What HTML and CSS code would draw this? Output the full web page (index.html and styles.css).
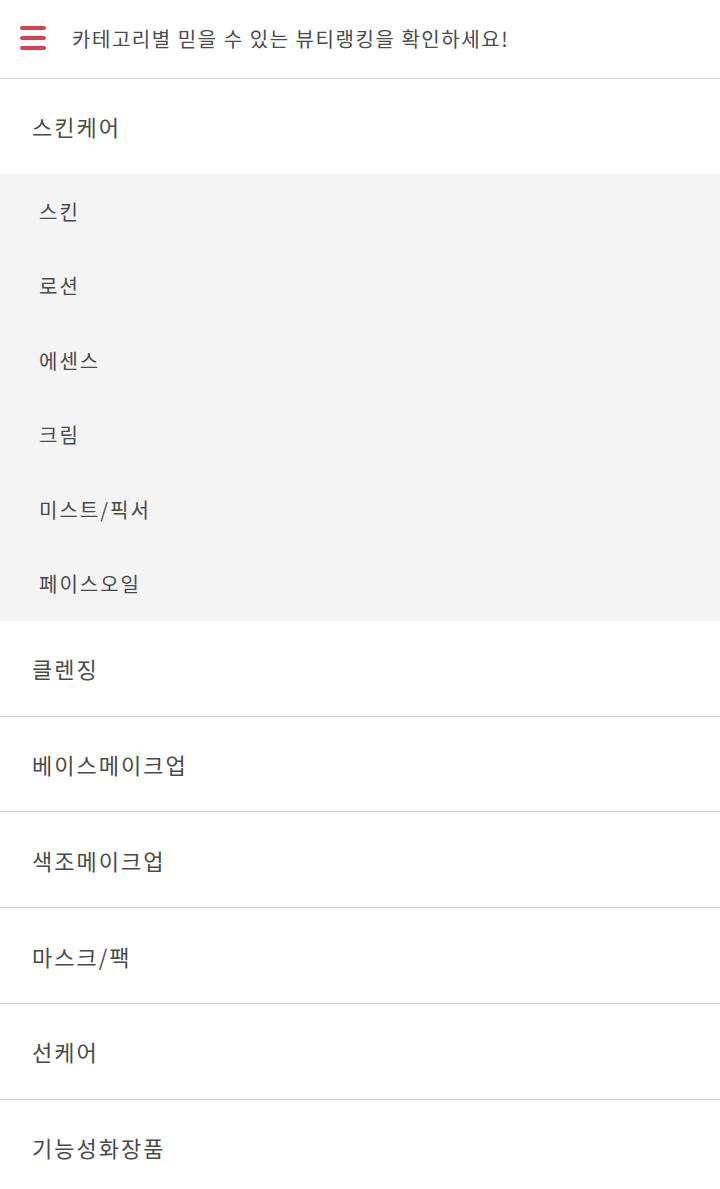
FILE: index.html
```html
<!doctype html>
<html>
<head>
    <title>뷰티랭킹 카테고리</title>

    <link rel="stylesheet" href="styles.css">
</head>
<body>
    <header class="top-bar">
      <button class="menu-btn" type="button">
        <span class="menu-line"></span>
        <span class="menu-line"></span>
        <span class="menu-line"></span>
      </button>
      <h1 class="top-title">카테고리별 믿을 수 있는 뷰티랭킹을 확인하세요!</h1>
    </header>

    <ul class="category-list">
      <li class="category open">
        <a class="category-name">스킨케어</a>
        <ul class="sub-list">
          <li class="sub-item">스킨</li>
          <li class="sub-item">로션</li>
          <li class="sub-item">에센스</li>
          <li class="sub-item">크림</li>
          <li class="sub-item">미스트/픽서</li>
          <li class="sub-item">페이스오일</li>
        </ul>
      </li>
      <li class="category"><a class="category-name">클렌징</a></li>
      <li class="category"><a class="category-name">베이스메이크업</a></li>
      <li class="category"><a class="category-name">색조메이크업</a></li>
      <li class="category"><a class="category-name">마스크/팩</a></li>
      <li class="category"><a class="category-name">선케어</a></li>
      <li class="category"><a class="category-name">기능성화장품</a></li>
    </ul>
</body>
</html>
```

FILE: styles.css
```css
* {
  margin: 0;
  padding: 0;
  box-sizing: border-box;
}
body {
  font-family: "Noto Sans CJK KR", "Noto Sans", sans-serif;
  color: #4a4a4a;
  background-color: #fff;
}
.top-bar {
  display: flex;
  align-items: center;
  height: 79px;
  padding: 0 0 2px 20px;
  border-bottom: 1px solid #d4d4d4;
}
.menu-btn {
  display: flex;
  flex-direction: column;
  gap: 6px;
  width: 26px;
  border: none;
  background: none;
  cursor: pointer;
}
.menu-line {
  display: block;
  height: 4px;
  border-radius: 2px;
  background-color: #d8404d;
}
.top-title {
  margin-left: 26px;
  font-size: 20px;
  font-weight: normal;
  color: #4a4a4a;
  letter-spacing: 1.55px;
}
.category-list {
  list-style: none;
}
.category {
  border-bottom: 1px solid #d4d4d4;
}
.category:last-child {
  border-bottom: none;
}
.category.open {
  border-bottom: none;
}
.category-name {
  display: flex;
  align-items: center;
  height: 94.8px;
  padding-left: 32px;
  font-size: 22px;
  letter-spacing: 2px;
  color: #4a4a4a;
}
.sub-list {
  list-style: none;
  background-color: #f4f4f4;
}
.sub-item {
  display: flex;
  align-items: center;
  height: 74.5px;
  padding-left: 39px;
  font-size: 20px;
  letter-spacing: 2px;
  color: #4a4a4a;
}
```
